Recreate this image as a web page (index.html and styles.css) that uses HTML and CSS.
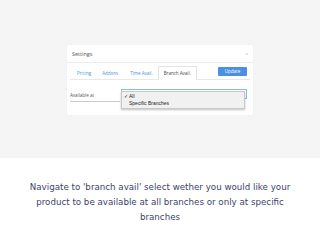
FILE: index.html
```html
<!DOCTYPE html>
<html>
<head>
<meta charset="utf-8">
<link rel="stylesheet" href="styles.css">
</head>
<body>
<div class="top">
  <div class="card">
    <div class="card-head">
      <span class="title">Settings</span>
      <span class="close">×</span>
    </div>
    <div class="tabs">
      <span class="tab t1">Pricing</span>
      <span class="tab t2">Addons</span>
      <span class="tab t3">Time Avail.</span>
      <span class="tab active">Branch Avail.</span>
      <span class="spacer"></span>
      <span class="btn">Update</span>
    </div>
    <div class="form-row">
      <span class="label">Available at</span>
      <div class="select">
        <span class="arrows">⇕</span>
        <div class="dropdown">
          <div class="opt"><span class="check">✓</span>All</div>
          <div class="opt">Specific Branches</div>
        </div>
      </div>
    </div>
  </div>
</div>
<div class="bottom">
  <p class="caption">Navigate to 'branch avail' select wether you would like your product to be available at all branches or only at specific branches</p>
</div>
</body>
</html>
```
FILE: styles.css
```css
html, body {
  margin: 0;
  padding: 0;
  width: 320px;
  height: 240px;
  overflow: hidden;
  background: #ffffff;
}
.top {
  height: 158px;
  background: #f5f5f5;
  padding-top: 45px;
  box-sizing: border-box;
}
.card {
  width: 186px;
  height: 70px;
  margin-left: 67px;
  background: #ffffff;
  border-radius: 2px;
  box-shadow: 0 0 2px rgba(0,0,0,0.06);
  font-family: "Open Sans", "DejaVu Sans", sans-serif;
}
.card-head {
  height: 17px;
  display: flex;
  align-items: center;
  justify-content: space-between;
  padding: 0 5px 0 5px;
  border-bottom: 1px solid #ececec;
}
.title {
  font-size: 5.5px;
  color: #555;
}
.close {
  font-size: 5px;
  color: #bbb;
}
.tabs {
  display: flex;
  align-items: center;
  height: 16px;
  padding: 0 3px 0 4px;
  border-bottom: 1px solid #e8e8e8;
  margin: 0 3px;
}
.tab {
  font-size: 4.5px;
  color: #4a8fe0;
  padding: 3px 0;
  margin-top: 3px;
  border: 1px solid transparent;
  border-bottom: none;
}
.t1 { margin-left: 2px; margin-right: 9px; }
.t2 { margin-right: 10px; }
.t3 { margin-right: 4px; }
.tab.active {
  color: #444;
  border-color: #e3e3e3;
  background: #fff;
  margin-bottom: -1px;
  padding: 3px 5px 4px;
}
.spacer { flex: 1; }
.btn {
  background: #4a8fe0;
  color: #fff;
  font-size: 4.5px;
  width: 29px;
  height: 9px;
  line-height: 9px;
  text-align: center;
  border-radius: 1px;
}
.form-row {
  display: flex;
  align-items: flex-start;
  padding: 9px 6px 0 3px;
}
.label {
  width: 50px;
  font-size: 4.5px;
  color: #555;
  padding-bottom: 3px;
  border-bottom: 1px solid #ccc;
  margin-top: 3px;
}
.select {
  position: relative;
  width: 126px;
  height: 10px;
  border: 1px solid #8cb9ef;
  box-sizing: border-box;
  margin-left: 1px;
}
.arrows {
  position: absolute;
  right: 1px;
  top: 1px;
  font-size: 5px;
  color: #666;
}
.dropdown {
  position: absolute;
  left: -1px;
  top: 1px;
  width: 122px;
  background: #f1f1f1;
  border: 1px solid #c8c8c8;
  box-shadow: 0 1px 2px rgba(0,0,0,0.25);
  padding: 1px 0;
  font-family: "Liberation Sans", Arial, sans-serif;
}
.opt {
  font-size: 5px;
  color: #222;
  height: 7px;
  line-height: 7px;
  padding-left: 7px;
  position: relative;
}
.check {
  position: absolute;
  left: 2px;
}
.bottom {
  padding-top: 22px;
}
.caption {
  margin: 0 auto;
  width: 268px;
  text-align: center;
  font-family: "DejaVu Sans", Verdana, sans-serif;
  font-size: 8.7px;
  line-height: 15px;
  color: #3b3f6b;
}
```
